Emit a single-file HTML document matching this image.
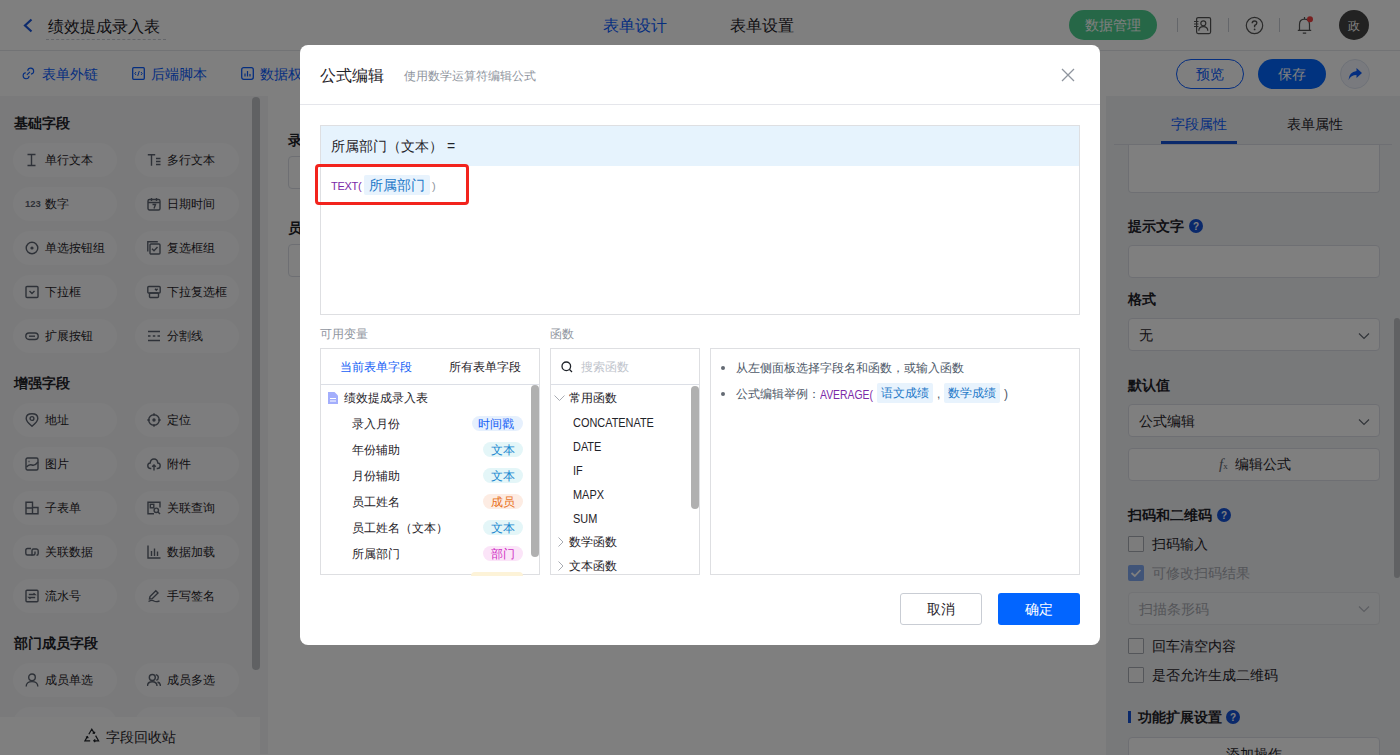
<!DOCTYPE html>
<html><head><meta charset="utf-8">
<style>
*{box-sizing:border-box;margin:0;padding:0}
html,body{width:1400px;height:755px;overflow:hidden;background:#fff;font-family:"Liberation Sans",sans-serif;color:#1f2329}
.abs{position:absolute}
.t{position:absolute;white-space:nowrap;line-height:1}
/* header */
#hdr{position:absolute;left:0;top:0;width:1400px;height:51px;background:#fff;border-bottom:1px solid #e5e6eb}
#bar2{position:absolute;left:0;top:51px;width:1400px;height:45px;background:#fff}
#left{position:absolute;left:0;top:96px;width:268px;height:658px;background:#f4f5f7}
.sec{position:absolute;left:14px;font-size:14px;font-weight:bold;color:#1f2329}
.pill{position:absolute;width:104px;height:34px;border-radius:17px;background:#fbfbfc;font-size:13px;color:#1f2329}
.pill span{position:absolute;left:32px;top:11px;line-height:12px;font-size:12px;white-space:nowrap}
.pill .ic{font-style:normal;position:absolute;left:12px;top:10px;width:16px;height:14px;line-height:0}
#mid{position:absolute;left:268px;top:96px;width:838px;height:659px;background:#fff}
#right{position:absolute;left:1106px;top:96px;width:294px;height:659px;background:#f1f2f5}
#mask{position:absolute;left:0;top:0;width:1400px;height:755px;background:rgba(0,0,0,0.5)}
#modal{position:absolute;left:300px;top:45px;width:800px;height:600px;background:#fff;border-radius:8px}
</style></head>
<body>
<div id="hdr">
<svg class="abs" style="left:22px;top:18px" width="12" height="15" viewBox="0 0 12 15"><path d="M9.5 1.5 L3 7.5 L9.5 13.5" fill="none" stroke="#1a56db" stroke-width="2.2"/></svg>
<div class="t" style="left:48px;top:18.5px;font-size:16px;color:#1f2329">绩效提成录入表</div>
<div class="abs" style="left:46px;top:39px;width:120px;border-top:1px dashed #c9cdd4"></div>
<div class="t" style="left:603px;top:18px;font-size:16px;color:#0a5cff">表单设计</div>
<div class="t" style="left:730px;top:18px;font-size:16px;color:#1f2329">表单设置</div>
<div class="abs" style="left:1069px;top:10px;width:88px;height:30px;border-radius:15px;background:#4ccf8f"></div>
<div class="t" style="left:1085px;top:18px;font-size:14px;color:#fff">数据管理</div>
<div class="abs" style="left:1177px;top:18px;width:1px;height:14px;background:#c9cdd4"></div>
<div class="abs" style="left:1228px;top:18px;width:1px;height:14px;background:#c9cdd4"></div>
<div class="abs" style="left:1279px;top:18px;width:1px;height:14px;background:#c9cdd4"></div>
<svg class="abs" style="left:1193px;top:16px" width="19" height="19" viewBox="0 0 19 19"><rect x="3.6" y="1.6" width="14" height="16" rx="1.5" fill="none" stroke="#555" stroke-width="1.2"/><circle cx="10.3" cy="7.3" r="2.5" fill="none" stroke="#555" stroke-width="1.2"/><path d="M5.8 14.8 Q5.8 10.6 10.3 10.6 Q14.8 10.6 14.8 14.8" fill="none" stroke="#555" stroke-width="1.2"/><path d="M1 5.5h4.5M1 8h4.5M1 10.5h4.5" stroke="#555" stroke-width="1.1"/></svg>
<svg class="abs" style="left:1245px;top:16px" width="19" height="19" viewBox="0 0 19 19"><circle cx="9.5" cy="9.5" r="8.2" fill="none" stroke="#555" stroke-width="1.2"/><path d="M7.2 7.3 Q7.2 5 9.5 5 Q11.8 5 11.8 7.1 Q11.8 8.6 9.6 9.5 L9.6 11.2" fill="none" stroke="#555" stroke-width="1.4"/><circle cx="9.6" cy="13.4" r="0.9" fill="#555"/></svg>
<svg class="abs" style="left:1296px;top:16px" width="18" height="19" viewBox="0 0 18 19"><path d="M3.5 14 L3.5 8.5 Q3.5 3.2 8.5 3.2 Q13.5 3.2 13.5 8.5 L13.5 14 M1.8 14.3 L15.2 14.3 M6.8 17.2 L10.2 17.2 M8.5 1 V3" fill="none" stroke="#555" stroke-width="1.2"/><circle cx="14" cy="3.3" r="3" fill="#f04040"/></svg>
<div class="abs" style="left:1339px;top:10px;width:30px;height:30px;border-radius:15px;background:#444"></div>
<div class="t" style="left:1348px;top:20px;font-size:12px;color:#fff">政</div>
</div>
<div id="bar2">
<svg class="abs" style="left:22px;top:16px" width="13" height="13" viewBox="0 0 13 13"><g fill="none" stroke="#0a5cff" stroke-width="1.1"><path d="M5.71 3.84 A3.0 3.0 0 1 1 8.96 7.09"/><path d="M7.09 8.96 A3.0 3.0 0 1 1 3.84 5.71"/><path d="M4.9 7.9 L7.9 4.9"/></g></svg>
<div class="t" style="left:42px;top:16px;font-size:14px;color:#0a5cff">表单外链</div>
<svg class="abs" style="left:132px;top:16px" width="13" height="13" viewBox="0 0 13 13"><rect x="0.7" y="0.7" width="11.6" height="11.6" rx="1" fill="none" stroke="#0a5cff" stroke-width="1.3"/><path d="M4 5 L2.8 6.5 L4 8 M9 5 L10.2 6.5 L9 8 M7.3 4 L5.7 9" fill="none" stroke="#0a5cff" stroke-width="1"/></svg>
<div class="t" style="left:151px;top:16px;font-size:14px;color:#0a5cff">后端脚本</div>
<svg class="abs" style="left:241px;top:16px" width="13" height="13" viewBox="0 0 13 13"><rect x="0.7" y="0.7" width="11.6" height="11.6" rx="2" fill="none" stroke="#0a5cff" stroke-width="1.3"/><path d="M4 9.5V6.5M6.5 9.5V4M9 9.5V7" stroke="#0a5cff" stroke-width="1.2"/></svg>
<div class="t" style="left:260px;top:16px;font-size:14px;color:#0a5cff">数据权限</div>
<div class="abs" style="left:1176px;top:8px;width:68px;height:30px;border-radius:15px;border:1px solid #0a5cff"></div>
<div class="t" style="left:1196px;top:16px;font-size:14px;color:#0a5cff">预览</div>
<div class="abs" style="left:1258px;top:8px;width:68px;height:30px;border-radius:15px;background:#0266ff"></div>
<div class="t" style="left:1278px;top:16px;font-size:14px;color:#fff">保存</div>
<div class="abs" style="left:1340px;top:8px;width:30px;height:30px;border-radius:15px;background:#f2f5fc;border:1px solid #dde3f0"></div>
<svg class="abs" style="left:1347px;top:15px" width="16" height="16" viewBox="0 0 16 16"><path d="M9.5 2 L15 7 L9.5 12 L9.5 9 Q4 9 1.5 14 Q2 6 9.5 5 Z" fill="#0a5cff"/></svg>
</div>
<div id="left">
<div class="t sec" style="top:20px">基础字段</div>
<div class="pill" style="left:13px;top:47px"><i class="ic"><svg width="14" height="14" viewBox="0 0 14 14" fill="none" stroke="#5c6370" stroke-width="1.4"><path d="M2.5 1.5h8M2.5 12.5h8M6.5 1.5v11"/></svg></i><span>单行文本</span></div>
<div class="pill" style="left:135px;top:47px"><i class="ic"><svg width="14" height="14" viewBox="0 0 14 14" fill="none" stroke="#5c6370" stroke-width="1.4"><path d="M0.8 1.8h7.4M4.5 1.8v11M9 5.5h4.5M9 8.5h4.5M9 11.5h4.5"/></svg></i><span>多行文本</span></div>
<div class="pill" style="left:13px;top:91px"><i class="ic"><svg width="17" height="14" viewBox="0 0 17 14"><text x="0" y="9.6" style="font-family:'Liberation Sans',sans-serif;font-weight:bold;font-size:9.5px;font-style:normal" fill="#5c6370">123</text></svg></i><span>数字</span></div>
<div class="pill" style="left:135px;top:91px"><i class="ic"><svg width="14" height="14" viewBox="0 0 14 14" fill="none" stroke="#5c6370" stroke-width="1.4"><rect x="1" y="2.5" width="12" height="10.5" rx="1.5"/><path d="M1 5.5h12M4.5 1v3M9.5 1v3M5.5 7.5h3l-1.5 4"/></svg></i><span>日期时间</span></div>
<div class="pill" style="left:13px;top:135px"><i class="ic"><svg width="14" height="14" viewBox="0 0 14 14" fill="none" stroke="#5c6370" stroke-width="1.4"><circle cx="7" cy="7" r="5.8"/><circle cx="7" cy="7" r="1.6" fill="#5c6370" stroke="none"/></svg></i><span>单选按钮组</span></div>
<div class="pill" style="left:135px;top:135px"><i class="ic"><svg width="14" height="14" viewBox="0 0 14 14" fill="none" stroke="#5c6370" stroke-width="1.4"><path d="M0.8 10.5V0.8h10"/><rect x="3" y="3" width="10" height="10" rx="1"/><path d="M5 7.7l2 2 3.5-3.7"/></svg></i><span>复选框组</span></div>
<div class="pill" style="left:13px;top:179px"><i class="ic"><svg width="14" height="14" viewBox="0 0 14 14" fill="none" stroke="#5c6370" stroke-width="1.4"><rect x="1" y="1.5" width="12" height="11" rx="1"/><path d="M4.5 6l2.5 2.5L9.5 6"/></svg></i><span>下拉框</span></div>
<div class="pill" style="left:135px;top:179px"><i class="ic"><svg width="14" height="14" viewBox="0 0 14 14" fill="none" stroke="#5c6370" stroke-width="1.4"><rect x="0.8" y="1.5" width="12.4" height="6.5" rx="1"/><rect x="2.5" y="8" width="9" height="4.5" rx="1"/><path d="M8 3.8l1.3 1.5 1.3-1.5"/></svg></i><span>下拉复选框</span></div>
<div class="pill" style="left:13px;top:223px"><i class="ic"><svg width="14" height="14" viewBox="0 0 14 14" fill="none" stroke="#5c6370" stroke-width="1.4"><rect x="0.8" y="4" width="12.4" height="6.5" rx="3.2"/><path d="M4 7.2h6"/></svg></i><span>扩展按钮</span></div>
<div class="pill" style="left:135px;top:223px"><i class="ic"><svg width="14" height="14" viewBox="0 0 14 14" fill="none" stroke="#5c6370" stroke-width="1.4"><path d="M1 2.5h12M1 7h2.5M5.8 7h2.5M10.5 7h2.5M1 11.5h12"/></svg></i><span>分割线</span></div>
<div class="t sec" style="top:280px">增强字段</div>
<div class="pill" style="left:13px;top:307px"><i class="ic"><svg width="14" height="14" viewBox="0 0 14 14" fill="none" stroke="#5c6370" stroke-width="1.4"><path d="M7 13.3 Q1.2 8.3 1.2 5.4 Q1.2 0.8 7 0.8 Q12.8 0.8 12.8 5.4 Q12.8 8.3 7 13.3Z"/><circle cx="7" cy="5.5" r="1.9"/></svg></i><span>地址</span></div>
<div class="pill" style="left:135px;top:307px"><i class="ic"><svg width="14" height="14" viewBox="0 0 14 14" fill="none" stroke="#5c6370" stroke-width="1.4"><circle cx="7" cy="7" r="5.3"/><circle cx="7" cy="7" r="1" fill="#5c6370"/><path d="M7 0.3v2.5M7 11.2v2.5M0.3 7h2.5M11.2 7h2.5"/></svg></i><span>定位</span></div>
<div class="pill" style="left:13px;top:351px"><i class="ic"><svg width="14" height="14" viewBox="0 0 14 14" fill="none" stroke="#5c6370" stroke-width="1.4"><rect x="1" y="1" width="12" height="12" rx="1.5"/><path d="M1.5 10 Q4 7 7 8 Q10 9 13 5 M3.5 4.5h1"/></svg></i><span>图片</span></div>
<div class="pill" style="left:135px;top:351px"><i class="ic"><svg width="14" height="14" viewBox="0 0 14 14" fill="none" stroke="#5c6370" stroke-width="1.4"><path d="M4.3 11.5 H3.5 Q0.8 11.5 0.8 8.7 Q0.8 6.3 3.2 6 Q3.6 2 7 2 Q10.4 2 10.8 6 Q13.2 6.3 13.2 8.7 Q13.2 11.5 10.5 11.5 H9.7"/><path d="M7 13.5V8M5.2 9.8l1.8-1.8 1.8 1.8"/></svg></i><span>附件</span></div>
<div class="pill" style="left:13px;top:395px"><i class="ic"><svg width="14" height="14" viewBox="0 0 14 14" fill="none" stroke="#5c6370" stroke-width="1.4"><path d="M1 1.2h6.5v11.6H1z M1 7h6.5M7.5 6.5h5.5v6.3H7.5"/></svg></i><span>子表单</span></div>
<div class="pill" style="left:135px;top:395px"><i class="ic"><svg width="14" height="14" viewBox="0 0 14 14" fill="none" stroke="#5c6370" stroke-width="1.4"><path d="M13 6.5V1.2H1v11.6h6"/><rect x="3.3" y="3.3" width="3.5" height="3.5"/><circle cx="9.3" cy="9.3" r="2.2"/><path d="M11 11l2 2"/></svg></i><span>关联查询</span></div>
<div class="pill" style="left:13px;top:439px"><i class="ic"><svg width="14" height="14" viewBox="0 0 14 14" fill="none" stroke="#5c6370" stroke-width="1.4"><path d="M6 3.5H2.5Q0.8 3.5 0.8 5.3V8.2Q0.8 10 2.5 10H8.5Q10 10 10 8.5V6.5"/><path d="M7 10.5V5.5Q7 4 8.5 4H11.5Q13.2 4 13.2 5.8V8.5Q13.2 10.3 11.5 10.3"/></svg></i><span>关联数据</span></div>
<div class="pill" style="left:135px;top:439px"><i class="ic"><svg width="14" height="14" viewBox="0 0 14 14" fill="none" stroke="#5c6370" stroke-width="1.4"><path d="M1 0.5v12.5h12.5M4.5 11V6M7.5 11V3.5M10.5 11V6.5"/></svg></i><span>数据加载</span></div>
<div class="pill" style="left:13px;top:483px"><i class="ic"><svg width="14" height="14" viewBox="0 0 14 14" fill="none" stroke="#5c6370" stroke-width="1.4"><rect x="1" y="1.2" width="12" height="11.6" rx="1"/><path d="M3.8 5.5h6.2l-1.5-1.3M10.2 8.5H4l1.5 1.3"/></svg></i><span>流水号</span></div>
<div class="pill" style="left:135px;top:483px"><i class="ic"><svg width="14" height="14" viewBox="0 0 14 14" fill="none" stroke="#5c6370" stroke-width="1.4"><path d="M1.5 12.5 Q5 10.5 7 12 Q9 13.2 12.5 12M2.5 10 L3 7.5 L8.8 1.7 L11 3.9 L5.2 9.7Z"/></svg></i><span>手写签名</span></div>
<div class="t sec" style="top:540px">部门成员字段</div>
<div class="pill" style="left:13px;top:567px"><i class="ic"><svg width="14" height="14" viewBox="0 0 14 14" fill="none" stroke="#5c6370" stroke-width="1.4"><circle cx="7" cy="4.3" r="3.3"/><path d="M1.2 13.5 Q1.2 8.6 7 8.6 Q12.8 8.6 12.8 13.5"/></svg></i><span>成员单选</span></div>
<div class="pill" style="left:135px;top:567px"><i class="ic"><svg width="14" height="14" viewBox="0 0 14 14" fill="none" stroke="#5c6370" stroke-width="1.4"><circle cx="5.3" cy="4.5" r="3"/><path d="M0.5 13 Q0.5 8.8 5.3 8.8 Q10 8.8 10 13M8.8 1.6 Q11.3 2 11.3 4.5 Q11.3 6.8 9.3 7.3M10.5 9 Q13.5 9.8 13.5 13"/></svg></i><span>成员多选</span></div>
<div class="pill" style="left:13px;top:611px"><i class="ic"><svg width="14" height="14" viewBox="0 0 14 14" fill="none" stroke="#5c6370" stroke-width="1.4"><circle cx="7" cy="4.3" r="3.3"/><path d="M1.2 13.5 Q1.2 8.6 7 8.6 Q12.8 8.6 12.8 13.5"/></svg></i><span>部门单选</span></div>
<div class="pill" style="left:135px;top:611px"><i class="ic"><svg width="14" height="14" viewBox="0 0 14 14" fill="none" stroke="#5c6370" stroke-width="1.4"><circle cx="5.3" cy="4.5" r="3"/><path d="M0.5 13 Q0.5 8.8 5.3 8.8 Q10 8.8 10 13M8.8 1.6 Q11.3 2 11.3 4.5 Q11.3 6.8 9.3 7.3M10.5 9 Q13.5 9.8 13.5 13"/></svg></i><span>部门多选</span></div>
<div class="abs" style="left:252px;top:1px;width:8px;height:573px;border-radius:4px;background:#c1c3c7"></div>
<div class="abs" style="left:0;top:621px;width:260px;height:38px;background:#fff"></div>
<svg class="abs" style="left:84px;top:632px" width="16" height="15" viewBox="0 0 16 15" fill="none" stroke="#1f2329" stroke-width="1.2"><path d="M4.8 6.3 L7.8 1.2 L10.3 5.4 M8.6 5.2 L10.3 5.4 L10.9 3.7 M11.6 7.6 L14.6 12.8 H9.8 M11.2 11.4 L9.8 12.8 L11.2 14.1 M6.2 12.8 H1 L3.4 8.6 M1.9 9.2 L3.4 8.6 L4.2 10.2"/></svg>
<div class="t" style="left:106px;top:634px;font-size:14px;color:#1f2329">字段回收站</div>
</div>
<div id="mid">
<div class="t" style="left:20px;top:37px;font-size:14px;font-weight:bold;color:#1f2329">录入月份</div>
<div class="abs" style="left:20px;top:60px;width:760px;height:33px;border:1px solid #dcdfe6;border-radius:4px;background:#fff"></div>
<div class="t" style="left:20px;top:125px;font-size:14px;font-weight:bold;color:#1f2329">员工姓名</div>
<div class="abs" style="left:20px;top:148px;width:760px;height:33px;border:1px solid #dcdfe6;border-radius:4px;background:#fff"></div>
</div>
<div id="right">
<div class="abs" style="left:8px;top:48px;width:278px;height:1px;background:#dcdfe6"></div>
<div class="t" style="left:65px;top:21px;font-size:14px;color:#0a5cff">字段属性</div>
<div class="abs" style="left:55px;top:45px;width:76px;height:3px;background:#1553d6"></div>
<div class="t" style="left:181px;top:21px;font-size:14px;color:#1f2329">表单属性</div>
<div class="abs" style="left:22px;top:49px;width:252px;height:48px;border:1px solid #dcdfe6;border-top:none;border-radius:0 0 4px 4px;background:#fff"></div>
<div class="t" style="left:22px;top:123px;font-size:14px;font-weight:bold;color:#1f2329">提示文字</div>
<svg class="abs" style="left:83px;top:123px" width="14" height="14" viewBox="0 0 14 14"><circle cx="7" cy="7" r="7" fill="#1553d6"/><text x="7" y="11" text-anchor="middle" font-family="Liberation Sans" font-weight="bold" font-size="10" fill="#fff">?</text></svg>
<div class="abs" style="left:22px;top:149px;width:252px;height:33px;border:1px solid #dcdfe6;border-radius:4px;background:#fff"></div>
<div class="t" style="left:22px;top:196px;font-size:14px;font-weight:bold;color:#1f2329">格式</div>
<div class="abs" style="left:22px;top:222px;width:252px;height:33px;border:1px solid #dcdfe6;border-radius:4px;background:#fff"></div>
<div class="t" style="left:33px;top:232px;font-size:14px;color:#1f2329">无</div>
<svg class="abs" style="left:252px;top:236px" width="12" height="8" viewBox="0 0 12 8"><path d="M1 1.5 L6 6.5 L11 1.5" fill="none" stroke="#646a73" stroke-width="1.2"/></svg>
<div class="t" style="left:22px;top:282px;font-size:14px;font-weight:bold;color:#1f2329">默认值</div>
<div class="abs" style="left:22px;top:308px;width:252px;height:33px;border:1px solid #dcdfe6;border-radius:4px;background:#fff"></div>
<div class="t" style="left:33px;top:318px;font-size:14px;color:#1f2329">公式编辑</div>
<svg class="abs" style="left:252px;top:322px" width="12" height="8" viewBox="0 0 12 8"><path d="M1 1.5 L6 6.5 L11 1.5" fill="none" stroke="#646a73" stroke-width="1.2"/></svg>
<div class="abs" style="left:22px;top:352px;width:252px;height:33px;border:1px solid #dcdfe6;border-radius:4px;background:#fff"></div>
<div class="t" style="left:113px;top:361px;font-size:15px;font-style:italic;font-family:'Liberation Serif',serif;color:#646a73">f<span style="font-size:9px;font-style:normal">x</span></div>
<div class="t" style="left:129px;top:361px;font-size:14px;color:#1f2329">编辑公式</div>
<div class="t" style="left:22px;top:412px;font-size:14px;font-weight:bold;color:#1f2329">扫码和二维码</div>
<svg class="abs" style="left:111px;top:412px" width="14" height="14" viewBox="0 0 14 14"><circle cx="7" cy="7" r="7" fill="#1553d6"/><text x="7" y="11" text-anchor="middle" font-family="Liberation Sans" font-weight="bold" font-size="10" fill="#fff">?</text></svg>
<div class="abs" style="left:22px;top:440px;width:16px;height:16px;border-radius:1px;background:#f8f8f9;border:1px solid #a9adb5"></div>
<div class="t" style="left:46px;top:441px;font-size:14px;color:#1f2329">扫码输入</div>
<div class="abs" style="left:22px;top:469px;width:16px;height:16px;border-radius:2px;background:#80a8f0"></div><svg class="abs" style="left:22px;top:469px" width="16" height="16" viewBox="0 0 16 16"><path d="M3.5 8 L6.8 11 L12.5 5" fill="none" stroke="#fff" stroke-width="1.8"/></svg>
<div class="t" style="left:46px;top:470px;font-size:14px;color:#a8abb2">可修改扫码结果</div>
<div class="abs" style="left:22px;top:496px;width:252px;height:33px;border:1px solid #e4e6ea;border-radius:4px;background:#f5f6f8"></div>
<div class="t" style="left:33px;top:506px;font-size:14px;color:#a8abb2">扫描条形码</div>
<svg class="abs" style="left:252px;top:509px" width="12" height="8" viewBox="0 0 12 8"><path d="M1 1.5 L6 6.5 L11 1.5" fill="none" stroke="#b8bcc4" stroke-width="1.2"/></svg>
<div class="abs" style="left:22px;top:542px;width:16px;height:16px;border-radius:1px;background:#f8f8f9;border:1px solid #a9adb5"></div>
<div class="t" style="left:46px;top:543px;font-size:14px;color:#1f2329">回车清空内容</div>
<div class="abs" style="left:22px;top:571px;width:16px;height:16px;border-radius:1px;background:#f8f8f9;border:1px solid #a9adb5"></div>
<div class="t" style="left:46px;top:572px;font-size:14px;color:#1f2329">是否允许生成二维码</div>
<div class="abs" style="left:22px;top:615px;width:3px;height:12px;background:#1553d6"></div>
<div class="t" style="left:32px;top:614px;font-size:14px;font-weight:bold;color:#1f2329">功能扩展设置</div>
<svg class="abs" style="left:120px;top:614px" width="14" height="14" viewBox="0 0 14 14"><circle cx="7" cy="7" r="7" fill="#1553d6"/><text x="7" y="11" text-anchor="middle" font-family="Liberation Sans" font-weight="bold" font-size="10" fill="#fff">?</text></svg>
<div class="abs" style="left:22px;top:641px;width:252px;height:33px;border:1px solid #dcdfe6;border-radius:4px;background:#fff"></div>
<div class="t" style="left:120px;top:651px;font-size:14px;color:#1f2329">添加操作</div>
<div class="abs" style="left:288px;top:222px;width:6px;height:260px;border-radius:3px;background:#c1c3c7"></div>
</div>
<div id="mask"></div>
<div id="modal">
<div class="t" style="left:20px;top:23px;font-size:16px;color:#1f2329;">公式编辑</div>
<div class="t" style="left:104px;top:25px;font-size:12px;color:#8f959e;">使用数学运算符编辑公式</div>
<svg class="abs" style="left:761px;top:23px" width="14" height="14" viewBox="0 0 14 14"><path d="M1 1 L13 13 M13 1 L1 13" stroke="#8f959e" stroke-width="1.3"/></svg>
<div class="abs" style="left:0px;top:59px;width:800px;height:1px;background:#e5e6eb"></div>
<div class="abs" style="left:20px;top:80px;width:760px;height:190px;border:1px solid #dedfe2;background:#fff"></div>
<div class="abs" style="left:21px;top:81px;width:758px;height:40px;background:#e6f3fd"></div>
<div class="t" style="left:31px;top:94px;font-size:14px;color:#1f2329;">所属部门（文本）</div><div class="t" style="left:147px;top:94px;font-size:14px;color:#1f2329;">=</div>
<div class="t" style="left:31px;top:136px;font-size:11px;color:#7b2aa8;letter-spacing:-0.3px;">TEXT(</div>
<div class="abs" style="left:64px;top:130px;width:66px;height:20px;background:#e8f3fd;border-radius:2px"></div>
<div class="t" style="left:69px;top:133px;font-size:14px;color:#1d78c8;">所属部门</div>
<div class="t" style="left:132px;top:136px;font-size:11px;color:#8f959e;">)</div>
<div class="abs" style="left:15px;top:119px;width:154px;height:41px;border:3px solid #f2231d;border-radius:4px"></div>
<div class="t" style="left:20px;top:283px;font-size:12px;color:#8f959e;">可用变量</div>
<div class="t" style="left:250px;top:283px;font-size:12px;color:#8f959e;">函数</div>
<div class="abs" style="left:20px;top:303px;width:220px;height:227px;border:1px solid #dedfe2;background:#fff;overflow:hidden"></div>
<div class="t" style="left:40px;top:316px;font-size:12px;color:#1560f5;">当前表单字段</div>
<div class="t" style="left:149px;top:316px;font-size:12px;color:#1f2329;">所有表单字段</div>
<div class="abs" style="left:21px;top:339px;width:218px;height:1px;background:#dcdfe6"></div>
<svg class="abs" style="left:28px;top:347px" width="10" height="12" viewBox="0 0 10 12"><path d="M0 0 H6.5 L10 3.5 V12 H0 Z" fill="#a3aefc"/><path d="M2 6.5h6M2 9h6" stroke="#fff" stroke-width="1"/></svg>
<div class="t" style="left:44px;top:347px;font-size:12px;color:#1f2329;">绩效提成录入表</div>
<div class="t" style="left:52px;top:373px;font-size:12px;color:#1f2329;">录入月份</div>
<div class="abs" style="left:172px;top:371px;width:51px;height:15px;background:#e6f0fd;border-radius:8px"></div>
<div class="t" style="left:178px;top:373px;font-size:12px;color:#1560f5;">时间戳</div>
<div class="t" style="left:52px;top:399px;font-size:12px;color:#1f2329;">年份辅助</div>
<div class="abs" style="left:183px;top:397px;width:40px;height:15px;background:#e4f6f8;border-radius:8px"></div>
<div class="t" style="left:191px;top:399px;font-size:12px;color:#1a88d0;">文本</div>
<div class="t" style="left:52px;top:425px;font-size:12px;color:#1f2329;">月份辅助</div>
<div class="abs" style="left:183px;top:423px;width:40px;height:15px;background:#e4f6f8;border-radius:8px"></div>
<div class="t" style="left:191px;top:425px;font-size:12px;color:#1a88d0;">文本</div>
<div class="t" style="left:52px;top:451px;font-size:12px;color:#1f2329;">员工姓名</div>
<div class="abs" style="left:183px;top:449px;width:40px;height:15px;background:#fdece3;border-radius:8px"></div>
<div class="t" style="left:191px;top:451px;font-size:12px;color:#e8711a;">成员</div>
<div class="t" style="left:52px;top:477px;font-size:12px;color:#1f2329;">员工姓名（文本）</div>
<div class="abs" style="left:183px;top:475px;width:40px;height:15px;background:#e4f6f8;border-radius:8px"></div>
<div class="t" style="left:191px;top:477px;font-size:12px;color:#1a88d0;">文本</div>
<div class="t" style="left:52px;top:503px;font-size:12px;color:#1f2329;">所属部门</div>
<div class="abs" style="left:183px;top:501px;width:40px;height:15px;background:#fbe4f8;border-radius:8px"></div>
<div class="t" style="left:191px;top:503px;font-size:12px;color:#d02fc4;">部门</div>
<div class="abs" style="left:171px;top:527px;width:52px;height:4px;background:#fdf3d8;border-radius:4px 4px 0 0"></div>
<div class="abs" style="left:231px;top:340px;width:8px;height:172px;background:#b0b0b0;border-radius:4px"></div>
<div class="abs" style="left:250px;top:303px;width:150px;height:227px;border:1px solid #dedfe2;background:#fff"></div>
<svg class="abs" style="left:261px;top:316px" width="12" height="12" viewBox="0 0 12 12"><circle cx="5.3" cy="5.3" r="4.3" fill="none" stroke="#1f2329" stroke-width="1.3"/><path d="M8.5 8.5 L11 11" stroke="#1f2329" stroke-width="1.3"/></svg>
<div class="t" style="left:281px;top:316px;font-size:12px;color:#c0c4cc;">搜索函数</div>
<div class="abs" style="left:251px;top:339px;width:148px;height:1px;background:#dcdfe6"></div>
<svg class="abs" style="left:254px;top:350px" width="11" height="7" viewBox="0 0 11 7"><path d="M0.5 0.5 L5.5 5.5 L10.5 0.5" fill="none" stroke="#a8abb2" stroke-width="1"/></svg>
<div class="t" style="left:269px;top:347px;font-size:12px;color:#1f2329;">常用函数</div>
<div class="t" style="left:273px;top:371px;font-size:13px;color:#1f2329;transform:scaleX(.84);transform-origin:0 0;">CONCATENATE</div>
<div class="t" style="left:273px;top:395px;font-size:13px;color:#1f2329;transform:scaleX(.84);transform-origin:0 0;">DATE</div>
<div class="t" style="left:273px;top:419px;font-size:13px;color:#1f2329;transform:scaleX(.84);transform-origin:0 0;">IF</div>
<div class="t" style="left:273px;top:443px;font-size:13px;color:#1f2329;transform:scaleX(.84);transform-origin:0 0;">MAPX</div>
<div class="t" style="left:273px;top:467px;font-size:13px;color:#1f2329;transform:scaleX(.84);transform-origin:0 0;">SUM</div>
<svg class="abs" style="left:258px;top:492px" width="6" height="10" viewBox="0 0 6 10"><path d="M0.5 0.5 L5 5 L0.5 9.5" fill="none" stroke="#a8abb2" stroke-width="1"/></svg>
<div class="t" style="left:269px;top:491px;font-size:12px;color:#1f2329;">数学函数</div>
<svg class="abs" style="left:258px;top:516px" width="6" height="10" viewBox="0 0 6 10"><path d="M0.5 0.5 L5 5 L0.5 9.5" fill="none" stroke="#a8abb2" stroke-width="1"/></svg>
<div class="t" style="left:269px;top:515px;font-size:12px;color:#1f2329;">文本函数</div>
<div class="abs" style="left:391px;top:341px;width:8px;height:123px;background:#b0b0b0;border-radius:4px"></div>
<div class="abs" style="left:410px;top:303px;width:370px;height:227px;border:1px solid #dedfe2;background:#fff"></div>
<div class="abs" style="left:421px;top:321px;width:4px;height:4px;background:#646a73;border-radius:2px"></div>
<div class="t" style="left:436px;top:317px;font-size:12px;color:#4e5969;">从左侧面板选择字段名和函数，或输入函数</div>
<div class="abs" style="left:421px;top:347px;width:4px;height:4px;background:#646a73;border-radius:2px"></div>
<div class="t" style="left:436px;top:343px;font-size:12px;color:#4e5969;">公式编辑举例：</div>
<div class="t" style="left:520px;top:343px;font-size:13px;color:#7b2aa8;transform:scaleX(.8);transform-origin:0 0;">AVERAGE(</div>
<div class="abs" style="left:577px;top:338px;width:56px;height:20px;background:#e8f3fd;border-radius:2px"></div>
<div class="t" style="left:581px;top:342px;font-size:12px;color:#1d78c8;">语文成绩</div>
<div class="t" style="left:637px;top:343px;font-size:12px;color:#4e5969;">,</div>
<div class="abs" style="left:644px;top:338px;width:56px;height:20px;background:#e8f3fd;border-radius:2px"></div>
<div class="t" style="left:648px;top:342px;font-size:12px;color:#1d78c8;">数学成绩</div>
<div class="t" style="left:704px;top:343px;font-size:12px;color:#4e5969;">)</div>
<div class="abs" style="left:600px;top:548px;width:82px;height:32px;border:1px solid #c9cdd4;border-radius:3px;background:#fff"></div>
<div class="t" style="left:627px;top:557px;font-size:14px;color:#1f2329;">取消</div>
<div class="abs" style="left:698px;top:548px;width:82px;height:32px;background:#0265ff;border-radius:3px"></div>
<div class="t" style="left:725px;top:557px;font-size:14px;color:#fff;">确定</div>
</div>
</body></html>
